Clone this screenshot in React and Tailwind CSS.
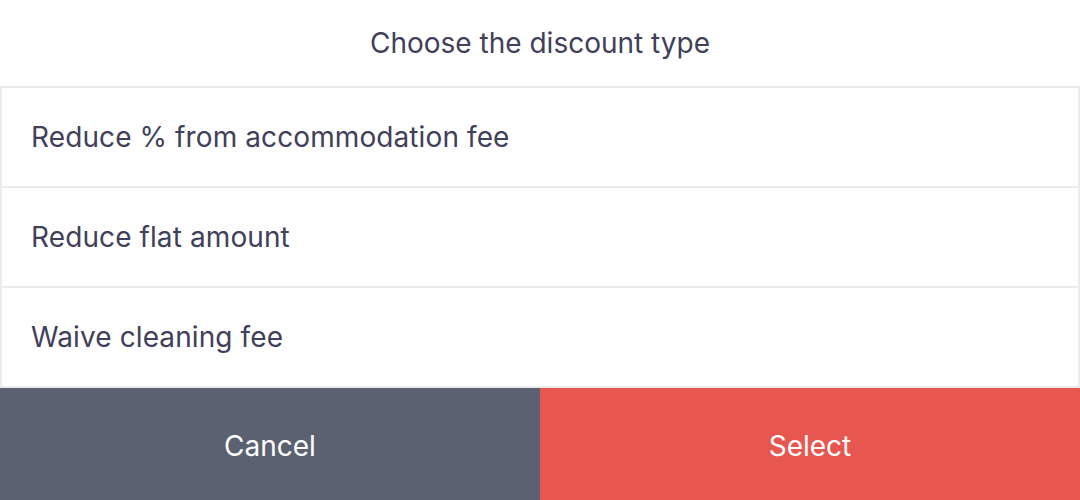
export default function App() {
  const items = ["Reduce % from accommodation fee", "Reduce flat amount", "Waive cleaning fee"];
  return (
    <div className="w-[1080px] h-[500px] bg-white flex flex-col overflow-hidden" style={{ fontFamily: 'Inter, "Noto Sans", sans-serif' }}>
      <div className="h-[86px] flex items-center justify-center text-[28px] text-[#41405a] pb-[1px]">
        Choose the discount type
      </div>
      <div className="border-2 border-[#ebebeb] border-b-0 flex flex-col">
        {items.map((t) => (
          <div key={t} className="h-[100px] flex items-center pl-[29px] pb-[1px] border-b-2 border-[#ebebeb] text-[28px] text-[#41405a] tracking-[0.1px]">
            {t}
          </div>
        ))}
      </div>
      <div className="flex flex-1">
        <div className="flex-1 bg-[#5b6170] text-white flex items-center justify-center text-[28px] pt-[3px]">Cancel</div>
        <div className="flex-1 bg-[#e85650] text-white flex items-center justify-center text-[28px] pt-[3px]">Select</div>
      </div>
    </div>
  );
}
